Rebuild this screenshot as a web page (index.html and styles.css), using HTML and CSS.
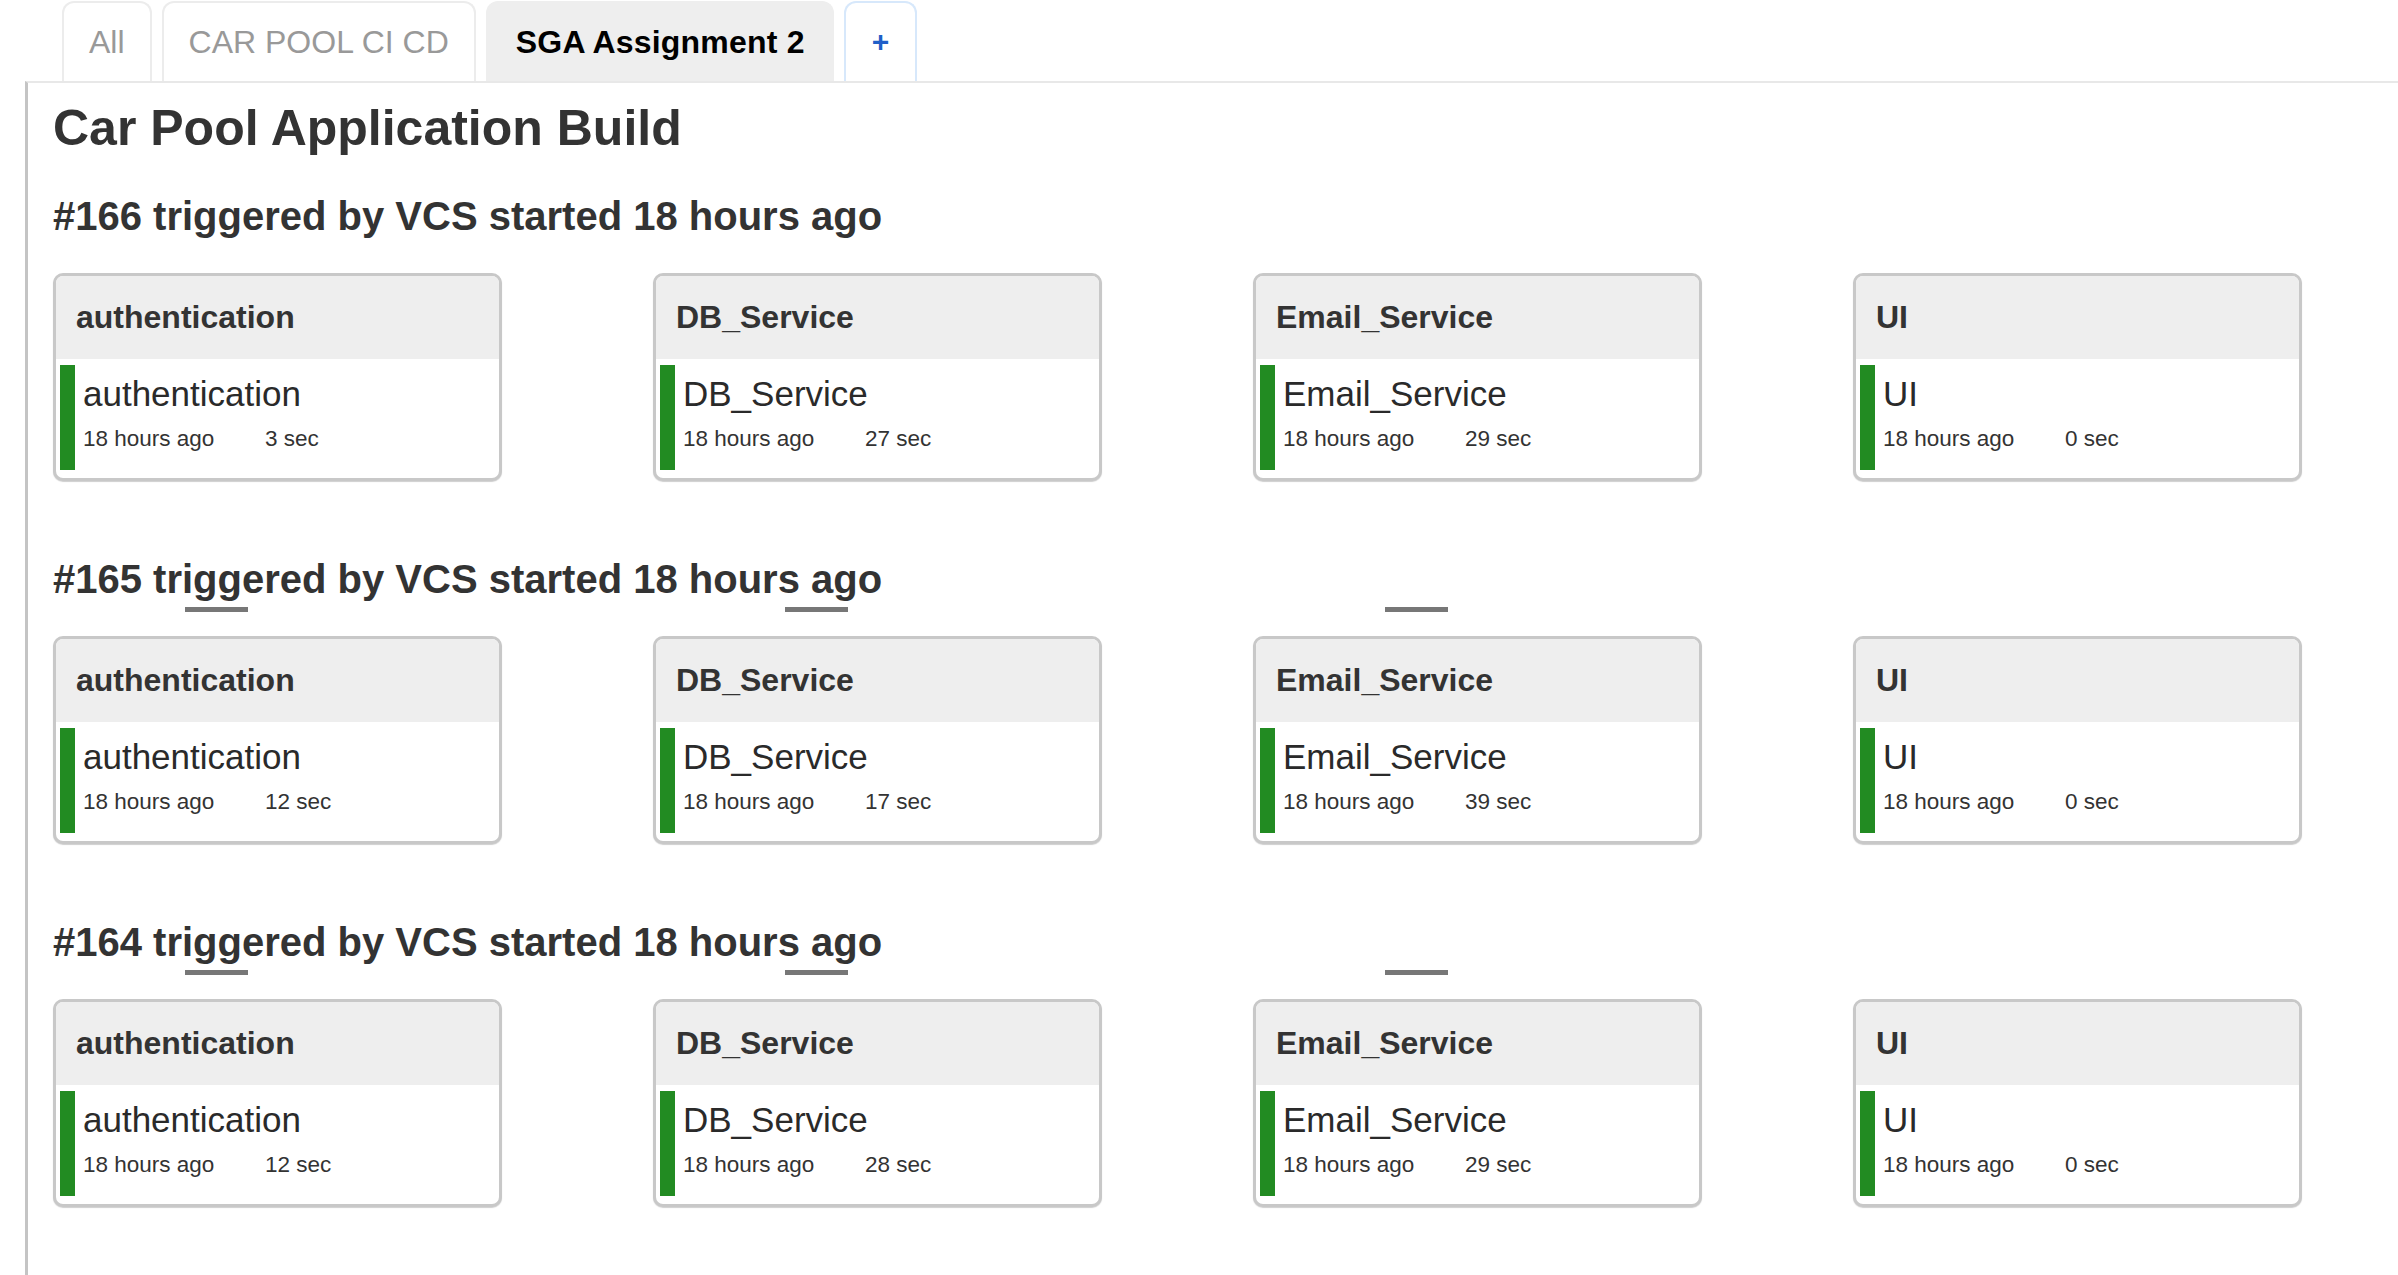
FILE: index.html
```html
<!DOCTYPE html>
<html lang="en">
<head>
<meta charset="utf-8">
<title>Car Pool Application Build</title>
<link rel="stylesheet" href="styles.css">
</head>
<body>
<nav class="tabbar">
  <div class="tab">All</div>
  <div class="tab">CAR POOL CI CD</div>
  <div class="tab tab-active">SGA Assignment 2</div>
  <div class="tab tab-add">+</div>
</nav>
<main class="panel">
  <h1 class="title">Car Pool Application Build</h1>

  <section class="build">
    <h2 class="build-title">#166 triggered by VCS started 18 hours ago</h2>
    <div class="dash-row"></div>
    <div class="jobs">
      <div class="card"><div class="card-head">authentication</div><div class="card-body"><div class="run"><div class="run-name">authentication</div><div class="run-meta"><span class="when">18 hours ago</span><span>3 sec</span></div></div></div></div>
      <div class="card"><div class="card-head">DB_Service</div><div class="card-body"><div class="run"><div class="run-name">DB_Service</div><div class="run-meta"><span class="when">18 hours ago</span><span>27 sec</span></div></div></div></div>
      <div class="card"><div class="card-head">Email_Service</div><div class="card-body"><div class="run"><div class="run-name">Email_Service</div><div class="run-meta"><span class="when">18 hours ago</span><span>29 sec</span></div></div></div></div>
      <div class="card"><div class="card-head">UI</div><div class="card-body"><div class="run"><div class="run-name">UI</div><div class="run-meta"><span class="when">18 hours ago</span><span>0 sec</span></div></div></div></div>
    </div>
  </section>

  <section class="build">
    <h2 class="build-title">#165 triggered by VCS started 18 hours ago</h2>
    <div class="dash-row"><span class="dash"></span><span class="dash"></span><span class="dash"></span></div>
    <div class="jobs">
      <div class="card"><div class="card-head">authentication</div><div class="card-body"><div class="run"><div class="run-name">authentication</div><div class="run-meta"><span class="when">18 hours ago</span><span>12 sec</span></div></div></div></div>
      <div class="card"><div class="card-head">DB_Service</div><div class="card-body"><div class="run"><div class="run-name">DB_Service</div><div class="run-meta"><span class="when">18 hours ago</span><span>17 sec</span></div></div></div></div>
      <div class="card"><div class="card-head">Email_Service</div><div class="card-body"><div class="run"><div class="run-name">Email_Service</div><div class="run-meta"><span class="when">18 hours ago</span><span>39 sec</span></div></div></div></div>
      <div class="card"><div class="card-head">UI</div><div class="card-body"><div class="run"><div class="run-name">UI</div><div class="run-meta"><span class="when">18 hours ago</span><span>0 sec</span></div></div></div></div>
    </div>
  </section>

  <section class="build">
    <h2 class="build-title">#164 triggered by VCS started 18 hours ago</h2>
    <div class="dash-row"><span class="dash"></span><span class="dash"></span><span class="dash"></span></div>
    <div class="jobs">
      <div class="card"><div class="card-head">authentication</div><div class="card-body"><div class="run"><div class="run-name">authentication</div><div class="run-meta"><span class="when">18 hours ago</span><span>12 sec</span></div></div></div></div>
      <div class="card"><div class="card-head">DB_Service</div><div class="card-body"><div class="run"><div class="run-name">DB_Service</div><div class="run-meta"><span class="when">18 hours ago</span><span>28 sec</span></div></div></div></div>
      <div class="card"><div class="card-head">Email_Service</div><div class="card-body"><div class="run"><div class="run-name">Email_Service</div><div class="run-meta"><span class="when">18 hours ago</span><span>29 sec</span></div></div></div></div>
      <div class="card"><div class="card-head">UI</div><div class="card-body"><div class="run"><div class="run-name">UI</div><div class="run-meta"><span class="when">18 hours ago</span><span>0 sec</span></div></div></div></div>
    </div>
  </section>
</main>
</body>
</html>
```

FILE: styles.css
```css
html, body {
  margin: 0;
  padding: 0;
  background: #ffffff;
}

body {
  font-family: "Liberation Sans", Arial, Helvetica, sans-serif;
  color: #333333;
  height: 1275px;
  overflow: hidden;
}

.tabbar {
  display: flex;
  gap: 10px;
  padding: 1px 0 0 62px;
  box-sizing: border-box;
  height: 81px;
}

.tab {
  box-sizing: border-box;
  height: 80px;
  padding: 0 25px;
  border: 2px solid #ececec;
  border-bottom: none;
  border-radius: 12px 12px 0 0;
  font-size: 32px;
  line-height: 78px;
  color: #999999;
  background: #ffffff;
}

.tab-active {
  background: #eeeeee;
  border-color: #eeeeee;
  color: #000000;
  font-weight: bold;
  padding: 0 27px 0 28px;
  letter-spacing: 0.2px;
}

.tab-add {
  border-color: #d7e8fb;
  color: #1f5fc8;
  font-weight: bold;
  font-size: 30px;
  padding: 0 26px;
}

.panel {
  margin-left: 25px;
  border-top: 2px solid #e8e8e8;
  border-left: 3px solid #c4c4c4;
  padding: 15px 0 0 25px;
  min-height: 1200px;
}

.title {
  margin: 0;
  font-size: 50px;
  line-height: 60px;
  font-weight: bold;
  color: #333333;
}

.build {
  margin-top: 34px;
}

.build + .build {
  margin-top: 74px;
}

.build-title {
  margin: 0;
  font-size: 40px;
  line-height: 48px;
  font-weight: bold;
  color: #333333;
}

.dash-row {
  display: grid;
  grid-template-columns: repeat(4, 449px);
  column-gap: 151px;
  height: 5px;
  margin: 4px 0 24px;
}

.dash {
  display: block;
  width: 63px;
  height: 5px;
  margin-left: 132px;
  background: #777777;
}

.jobs {
  display: grid;
  grid-template-columns: repeat(4, 449px);
  column-gap: 151px;
}

.card {
  box-sizing: border-box;
  height: 208px;
  border: 3px solid #c8c8c8;
  border-radius: 10px;
  overflow: hidden;
  background: #ffffff;
  box-shadow: 0 1px 1px #cfcfcf;
}

.card-head {
  height: 83px;
  display: flex;
  align-items: center;
  padding-left: 20px;
  background: #eeeeee;
  font-size: 32px;
  font-weight: bold;
  color: #333333;
}

.card-body {
  height: 119px;
  box-sizing: border-box;
  padding: 6px 0 8px 4px;
}

.run {
  height: 105px;
  box-sizing: border-box;
  border-left: 15px solid #228b22;
  padding: 9px 0 0 8px;
}

.run-name {
  font-size: 35px;
  line-height: 40px;
  color: #2a2a2a;
}

.run-meta {
  margin-top: 12px;
  font-size: 22.5px;
  line-height: 26px;
  color: #333333;
  display: flex;
}

.when {
  width: 182px;
}
```
